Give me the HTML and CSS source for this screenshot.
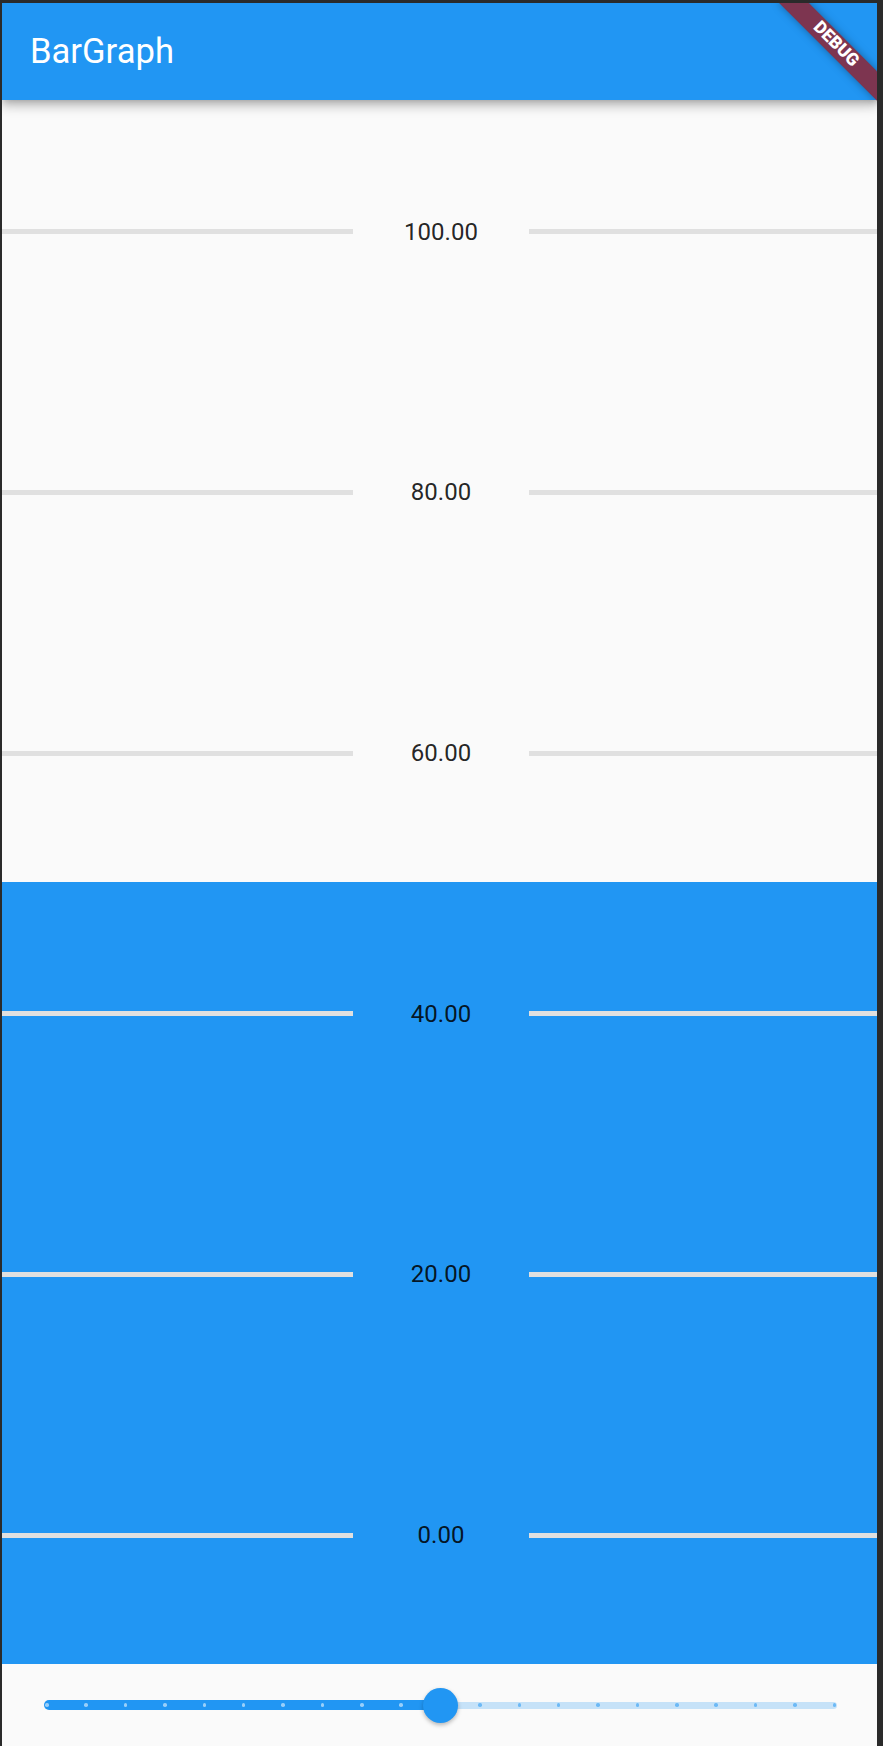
FILE: index.html
```html
<!DOCTYPE html>
<html lang="en">
<head>
<meta charset="utf-8">
<title>BarGraph</title>
<link rel="stylesheet" href="styles.css">
</head>
<body>
<div class="frame">
  <div class="screen">
    <header class="appbar">
      <h1 class="title">BarGraph</h1>
    </header>
    <main class="chart">
      <div class="bar"></div>
      <div class="row r1"><span class="line"></span><span class="label">100.00</span><span class="line"></span></div>
      <div class="row r2"><span class="line"></span><span class="label">80.00</span><span class="line"></span></div>
      <div class="row r3"><span class="line"></span><span class="label">60.00</span><span class="line"></span></div>
      <div class="row r4"><span class="line"></span><span class="label">40.00</span><span class="line"></span></div>
      <div class="row r5"><span class="line"></span><span class="label">20.00</span><span class="line"></span></div>
      <div class="row r6"><span class="line"></span><span class="label">0.00</span><span class="line"></span></div>
    </main>
    <footer class="slider-area">
      <div class="slider">
        <div class="track">
          <span class="active"></span><span class="inactive"></span>
        </div>
        <div class="ticks">
          <i class="tick on"></i><i class="tick on"></i><i class="tick on"></i><i class="tick on"></i><i class="tick on"></i><i class="tick on"></i><i class="tick on"></i><i class="tick on"></i><i class="tick on"></i><i class="tick on"></i><i class="tick on"></i><i class="tick"></i><i class="tick"></i><i class="tick"></i><i class="tick"></i><i class="tick"></i><i class="tick"></i><i class="tick"></i><i class="tick"></i><i class="tick"></i><i class="tick"></i>
        </div>
        <div class="thumb"></div>
      </div>
    </footer>
    <div class="debug-banner">DEBUG</div>
  </div>
</div>
</body>
</html>
```
FILE: styles.css
```css
html, body {
  margin: 0;
  padding: 0;
  background: #2a2a2a;
}
.frame {
  width: 883px;
  height: 1746px;
  box-sizing: border-box;
  padding: 3px 6px 0 2px;
}
.screen {
  position: relative;
  width: 875px;
  height: 1743px;
  overflow: hidden;
  background: #fafafa;
  display: flex;
  flex-direction: column;
  font-family: Roboto, "Noto Sans", sans-serif;
}
.appbar {
  position: relative;
  z-index: 2;
  flex: 0 0 97px;
  height: 97px;
  background: #2196f3;
  display: flex;
  align-items: center;
  padding-left: 28px;
  box-shadow: 0 3px 7px -2px rgba(0,0,0,0.2), 0 7px 9px 0 rgba(0,0,0,0.14), 0 2px 17px 0 rgba(0,0,0,0.12);
}
.title {
  margin: 0;
  font-size: 34.6px;
  font-weight: 400;
  color: #ffffff;
  line-height: 1.17;
}
.chart {
  flex: 1 1 auto;
  display: grid;
  grid-template-rows: repeat(6, 1fr);
  grid-template-columns: 1fr;
  background: #fafafa;
}
.bar {
  grid-row: 4 / 7;
  grid-column: 1;
  background: #2196f3;
}
.row {
  grid-column: 1;
  display: grid;
  grid-template-columns: 351px 176px 1fr;
  align-items: center;
  padding-top: 3px;
}
.r1 { grid-row: 1; }
.r2 { grid-row: 2; }
.r3 { grid-row: 3; }
.r4 { grid-row: 4; }
.r5 { grid-row: 5; }
.r6 { grid-row: 6; }
.line {
  display: block;
  height: 5px;
  background: #e0e0e0;
}
.label {
  text-align: center;
  font-size: 24px;
  color: rgba(0,0,0,0.87);
  line-height: 28px;
}
.slider-area {
  flex: 0 0 82px;
  height: 82px;
  background: #fafafa;
  display: flex;
  align-items: center;
  padding: 0 40px 0 42px;
}
.slider {
  position: relative;
  flex: 1;
  height: 36px;
  display: flex;
  align-items: center;
}
.track {
  flex: 1;
  display: flex;
  align-items: center;
}
.active {
  flex: 1;
  height: 10px;
  background: #2196f3;
  border-radius: 5px 0 0 5px;
}
.inactive {
  flex: 1;
  height: 7px;
  background: #c6e2f8;
  border-radius: 0 3.5px 3.5px 0;
}
.ticks {
  position: absolute;
  left: 1px;
  right: 1px;
  top: 0;
  bottom: 0;
  display: flex;
  justify-content: space-between;
  align-items: center;
}
.tick {
  display: block;
  width: 3.5px;
  height: 3.5px;
  border-radius: 50%;
  background: #6db9f5;
}
.tick.on {
  background: #99cff9;
}
.thumb {
  position: absolute;
  left: calc(50% - 17.5px);
  top: calc(50% - 17.5px);
  width: 35px;
  height: 35px;
  border-radius: 50%;
  background: #2196f3;
  box-shadow: 0 2px 4px rgba(0,0,0,0.28);
}
.debug-banner {
  position: absolute;
  z-index: 3;
  left: 764px;
  top: 31px;
  width: 139px;
  height: 21px;
  box-sizing: border-box;
  padding-bottom: 2px;
  transform: rotate(45deg);
  background: #7d3550;
  box-shadow: 0 0 8px rgba(0,0,0,0.35);
  color: #ffffff;
  font-family: Roboto, "Liberation Sans", sans-serif;
  font-weight: 900;
  font-size: 17.5px;
  line-height: 19px;
  text-align: center;
}
```
